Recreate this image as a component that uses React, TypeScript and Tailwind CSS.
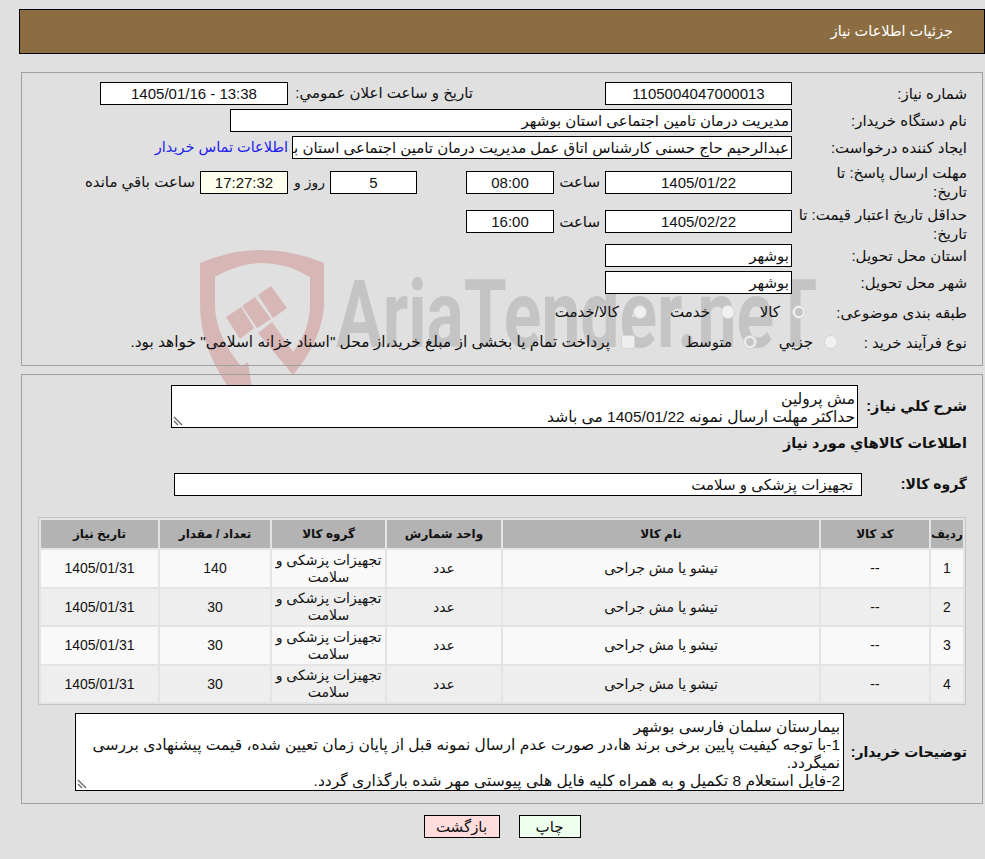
const F = "font-['Liberation_Sans','DejaVu_Sans',sans-serif]";

const box = "h-[23px] shrink-0 border border-black bg-white text-[15px] leading-[21px] overflow-hidden whitespace-nowrap";

const rows = [
  { id: 1, qty: 140, bg: "bg-[#f9f9f9]", h: "h-[37px]" },
  { id: 2, qty: 30, bg: "bg-[#eeeeee]", h: "h-[36px]" },
  { id: 3, qty: 30, bg: "bg-[#f9f9f9]", h: "h-[37px]" },
  { id: 4, qty: 30, bg: "bg-[#eeeeee]", h: "h-[36px]" },
];

function Label({ children, className = "w-[190px]" }: { children: React.ReactNode; className?: string }) {
  return <div className={`shrink-0 pr-[15px] text-[15px] leading-[19px] ${className}`}>{children}</div>;
}

function Radio({ on }: { on?: boolean }) {
  return (
    <span className="inline-flex h-[14px] w-[14px] shrink-0 items-center justify-center rounded-full border border-[#d4d4d4] bg-[#f0f0f0]">
      {on && <span className="h-[8px] w-[8px] rounded-full bg-[#c6c6c6]" />}
    </span>
  );
}

function Grip() {
  return (
    <svg width="10" height="10" viewBox="0 0 10 10" className="absolute bottom-[1px] left-[1px]">
      <path d="M1 1 L9 9 M1 5 L5 9" stroke="#666" strokeWidth="1.3" fill="none" />
    </svg>
  );
}

function Watermark() {
  return (
    <div className="absolute left-[190px] top-[245px] z-0 h-[150px] w-[640px]" dir="ltr">
      <svg width="150" height="150" viewBox="190 245 150 150" className="absolute left-0 top-0">
        <path
          d="M200 263 Q262 237 324 263 L324 305 Q322 340 293 375 L258 333 L272 322 L293 352 Q310 330 310 305 L310 277 Q262 249 215 277 L215 305 Q215 335 241 366 L248 362 L253 395 L234 395 Q200 350 200 305 Z"
          fill="#d7b6b6"
        />
        <path d="M226 317 L241 307 L254 328 L240 339 Z M242 306 L255 297 L271 319 L257 328 Z M258 295 L271 286 L287 308 L273 318 Z" fill="#d7b6b6" />
      </svg>
      <span className="absolute left-[146px] top-[20px] origin-left scale-x-[0.74] whitespace-nowrap font-['Roboto',sans-serif] text-[94px] font-bold leading-[100px] text-[#c4c4c4]">
        AriaTender.neT
      </span>
    </div>
  );
}

export default function App() {
  return (
    <div dir="rtl" className={`relative h-[859px] overflow-hidden bg-[#e0e0e0] text-[15px] text-[#111] ${F}`}>
      <Watermark />
      <div className="relative z-10">
        <div className="ml-[19px] pt-[9px]">
          <div className="flex h-[45px] items-center border border-black bg-[#8c6d42] pr-[31px] text-[14.5px] text-white">جزئیات اطلاعات نیاز</div>
        </div>

        <div className="ml-[21px] mr-[2px] mt-[18px] h-[294px] border border-[#a0a0a0] pt-[9px]">
          <div className="flex h-[23px] items-center">
            <Label>شماره نیاز:</Label>
            <div className={`${box} w-[187px] text-center`}>1105004047000013</div>
            <div className="w-[317px] shrink-0 whitespace-nowrap pr-[132px]">تاریخ و ساعت اعلان عمومي:</div>
            <div className={`${box} w-[188px] text-center`} dir="ltr">1405/01/16 - 13:38</div>
          </div>
          <div className="mt-[4px] flex h-[23px] items-center">
            <Label>نام دستگاه خریدار:</Label>
            <div className={`${box} w-[562px] pr-[2px]`}>مدیریت درمان تامین اجتماعی استان بوشهر</div>
          </div>
          <div className="mt-[4px] flex h-[23px] items-center">
            <Label>ایجاد کننده درخواست:</Label>
            <div className={`${box} w-[500px] pr-[2px]`}>عبدالرحیم حاج حسنی کارشناس اتاق عمل مدیریت درمان تامین اجتماعی استان بوشهر</div>
            <a className="mr-[4px] whitespace-nowrap text-[14.5px] text-[#2020f0]">اطلاعات تماس خریدار</a>
          </div>
          <div className="mt-[4px] flex h-[38px] items-center">
            <Label>مهلت ارسال پاسخ: تا<br />تاریخ:</Label>
            <div className={`${box} w-[187px] text-center`}>1405/01/22</div>
            <div className="w-[51px] shrink-0 pr-[5px]">ساعت</div>
            <div className={`${box} w-[88px] text-center`}>08:00</div>
            <div className="w-[49px] shrink-0" />
            <div className={`${box} w-[87px] text-center`}>5</div>
            <div className="w-[42px] shrink-0 whitespace-nowrap pr-[5px] text-[14px]">روز و</div>
            <div className={`${box} w-[88px] !bg-[#ffffee] text-center`}>17:27:32</div>
            <div className="whitespace-nowrap pr-[5px]">ساعت باقي مانده</div>
          </div>
          <div className="mt-[4px] flex h-[35px] items-start">
            <Label>حداقل تاریخ اعتبار قیمت: تا تاریخ:</Label>
            <div className={`${box} mt-[5px] w-[187px] text-center`}>1405/02/22</div>
            <div className="mt-[5px] w-[51px] shrink-0 pr-[5px] leading-[23px]">ساعت</div>
            <div className={`${box} mt-[5px] w-[88px] text-center`}>16:00</div>
          </div>
          <div className="mt-[4px] flex h-[23px] items-center">
            <Label>استان محل تحویل:</Label>
            <div className={`${box} w-[187px] pr-[2px]`}>بوشهر</div>
          </div>
          <div className="mt-[4px] flex h-[23px] items-center">
            <Label>شهر محل تحویل:</Label>
            <div className={`${box} w-[187px] pr-[2px]`}>بوشهر</div>
          </div>
          <div className="mt-[5px] flex h-[26px] items-center">
            <Label className="w-[176px]">طبقه بندی موضوعی:</Label>
            <Radio on />
            <span className="mr-[12px] w-[45px] shrink-0">کالا</span>
            <Radio />
            <span className="mr-[11px] w-[63px] shrink-0">خدمت</span>
            <Radio />
            <span className="mr-[14px]">کالا/خدمت</span>
          </div>
          <div className="mt-[4px] flex h-[26px] items-center">
            <Label className="w-[144px]">نوع فرآیند خرید :</Label>
            <Radio />
            <span className="mr-[11px] w-[56px] shrink-0">جزيي</span>
            <Radio on />
            <span className="mr-[11px] w-[97px] shrink-0">متوسط</span>
            <span className="h-[14px] w-[14px] shrink-0 rounded-[2px] border border-[#d4d4d4] bg-[#eeeeee]" />
            <span className="mr-[11px] whitespace-nowrap text-[15.4px]">پرداخت تمام یا بخشی از مبلغ خرید،از محل "اسناد خزانه اسلامی" خواهد بود.</span>
          </div>
        </div>

        <div className="ml-[21px] mr-[2px] mt-[8px] h-[430px] border border-[#a0a0a0] pt-[10px]">
          <div className="flex items-center">
            <div className="w-[124px] shrink-0 whitespace-nowrap pr-[15px] text-[14.5px] font-bold">شرح کلي نیاز:</div>
            <div className="relative h-[43px] w-[687px] border border-black bg-white pr-[2px] pt-[4px] text-[15.5px] leading-[18px]">
              <div>مش پرولین</div>
              <div>حداکثر مهلت ارسال نمونه 1405/01/22 می باشد</div>
              <Grip />
            </div>
          </div>
          <div className="mt-[3px] pr-[15px] text-[14.5px] font-bold leading-[24px]">اطلاعات کالاهاي مورد نیاز</div>
          <div className="mt-[18px] flex items-center">
            <div className="w-[120px] shrink-0 pr-[15px] text-[14px] font-bold">گروه کالا:</div>
            <div className={`${box} w-[688px] pr-[8px]`}>تجهیزات پزشکی و سلامت</div>
          </div>

          <div className="ml-[16px] mr-[16px] mt-[21px] border border-[#c4c4c4] bg-[#e4e4e4]">
            <table className="w-full table-fixed border-separate border-spacing-[2px] text-center text-[14px]">
              <thead>
                <tr className="h-[28px] bg-[#b3b3b3] text-[12px]">
                  <th className="w-[32px] font-bold">ردیف</th>
                  <th className="w-[108px] font-bold">کد کالا</th>
                  <th className="w-[316px] font-bold">نام کالا</th>
                  <th className="w-[114px] font-bold">واحد شمارش</th>
                  <th className="w-[113px] font-bold">گروه کالا</th>
                  <th className="w-[110px] font-bold">تعداد / مقدار</th>
                  <th className="font-bold">تاریخ نیاز</th>
                </tr>
              </thead>
              <tbody>
                {rows.map((r) => (
                  <tr key={r.id} className={`${r.h} ${r.bg}`}>
                    <td>{r.id}</td>
                    <td>--</td>
                    <td>تیشو یا مش جراحی</td>
                    <td>عدد</td>
                    <td className="leading-[17px]">تجهیزات پزشکی و سلامت</td>
                    <td>{r.qty}</td>
                    <td>1405/01/31</td>
                  </tr>
                ))}
              </tbody>
            </table>
          </div>

          <div className="mt-[8px] flex items-center">
            <div className="w-[138px] shrink-0 whitespace-nowrap pr-[15px] text-[14px] font-bold">توضیحات خریدار:</div>
            <div className="relative h-[78px] w-[769px] border border-black bg-white pl-[10px] pr-[3px] pt-[4px] text-[15.5px] leading-[18px]">
              <div>بیمارستان سلمان فارسی بوشهر</div>
              <div>1-با توجه کیفیت پایین برخی برند ها،در صورت عدم ارسال نمونه قبل از پایان زمان تعیین شده، قیمت پیشنهادی بررسی نمیگردد.</div>
              <div>2-فایل استعلام 8 تکمیل و به همراه کلیه فایل هلی پیوستی مهر شده بارگذاری گردد.</div>
              <Grip />
            </div>
          </div>
        </div>

        <div className="mt-[11px] flex justify-center gap-[19px] pl-[19px]">
          <button className="h-[23px] w-[62px] border border-black bg-[#eeffee] text-[15px]">چاپ</button>
          <button className="h-[23px] w-[76px] border border-black bg-[#ffdddd] text-[15px]">بازگشت</button>
        </div>
      </div>
    </div>
  );
}
